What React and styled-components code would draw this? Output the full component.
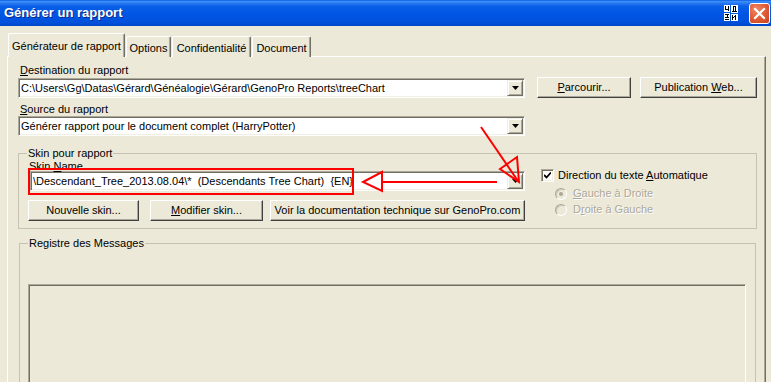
import React from 'react'
import styled, { createGlobalStyle } from 'styled-components'

const GlobalStyle = createGlobalStyle`
  html, body {
    margin: 0;
    padding: 0;
    background: #ece9d8;
  }
  body {
    font-family: "Liberation Sans", Arial, sans-serif;
    font-size: 11px;
    color: #000;
  }
`

const Window = styled.div`
  position: relative;
  width: 771px;
  height: 382px;
  overflow: hidden;
  background: #ece9d8;
  display: flex;
  flex-direction: column;
`

const TitleBar = styled.div`
  flex: none;
  height: 26px;
  box-sizing: border-box;
  display: flex;
  align-items: center;
  padding: 0 1px 0 4px;
  background: linear-gradient(to bottom, #0a5ae0 0%, #3d8ff7 6%, #2a7af2 12%, #0a5fe8 24%, #0055e3 55%, #0052dd 85%, #0146c6 100%);
`

const Title = styled.div`
  flex: 1;
  color: #fff;
  font-family: "Liberation Sans", Arial, sans-serif;
  font-weight: bold;
  font-size: 13px;
  text-shadow: 1px 1px #0a2a8a;
  margin-top: -1px;
`

const Glyph = styled.svg`
  flex: none;
  display: block;
  margin-top: -1px;
`

const CloseButton = styled.div`
  flex: none;
  width: 21px;
  height: 21px;
  box-sizing: border-box;
  margin-left: 11px;
  border: 1px solid #fff;
  border-radius: 3px;
  background: radial-gradient(circle at 35% 30%, #f08a68 0%, #e2603a 45%, #c8401a 100%);
  display: flex;
  align-items: center;
  justify-content: center;
`

const Body = styled.div`
  flex: 1;
  display: flex;
  flex-direction: column;
  padding: 7px 5px 0 7px;
  min-height: 0;
`

const TabStrip = styled.div`
  display: flex;
  align-items: flex-end;
  height: 24px;
  padding-left: 1px;
  margin-bottom: -1px;
  position: relative;
  z-index: 1;
`

const Tab = styled.div`
  box-sizing: border-box;
  width: ${p => p.$w}px;
  height: ${p => (p.$active ? 24 : 21)}px;
  padding-top: ${p => (p.$active ? 6 : 5)}px;
  line-height: 13px;
  text-align: center;
  white-space: nowrap;
  background: #ece9d8;
  border-top: 1px solid #fff;
  border-left: 1px solid #fff;
  border-right: 1px solid #716f64;
  box-shadow: inset -1px 0 #aca899;
  border-radius: 2px 2px 0 0;
  margin-left: ${p => (p.$active ? 0 : 1)}px;
`

const Panel = styled.div`
  flex: 1;
  box-sizing: border-box;
  border-top: 1px solid #fff;
  border-left: 1px solid #fff;
  border-right: 1px solid #716f64;
  box-shadow: inset -1px 0 #aca899;
  padding: 7px 0 0 10px;
`

const Label = styled.div`
  line-height: 13px;
  height: ${p => p.$h || 13}px;
  margin-top: ${p => p.$mt || 0}px;
  padding-left: ${p => p.$pl || 2}px;
  white-space: nowrap;
`

const Row = styled.div`
  display: flex;
  align-items: flex-end;
  margin-top: ${p => p.$mt || 0}px;
`

const Combo = styled.div`
  box-sizing: border-box;
  width: ${p => p.$w}px;
  height: 20px;
  margin-left: ${p => p.$ml || 0}px;
  background: #fff;
  border: 1px solid;
  border-color: #aca899 #fff #fff #aca899;
  box-shadow: inset 1px 1px #716f64, inset -1px -1px #f1efe2;
  display: flex;
  align-items: center;
  padding-left: 2px;
`

const ComboText = styled.div`
  flex: 1;
  white-space: nowrap;
  overflow: hidden;
  line-height: 13px;
`

const DropButton = styled.div`
  flex: none;
  box-sizing: border-box;
  width: 16px;
  height: 16px;
  margin-right: 1px;
  background: #ece9d8;
  border: 1px solid;
  border-color: #f1efe2 #716f64 #716f64 #f1efe2;
  box-shadow: inset 1px 1px #fff, inset -1px -1px #aca899;
  display: flex;
  align-items: center;
  justify-content: center;
`

const Button = styled.div`
  box-sizing: border-box;
  flex: none;
  width: ${p => p.$w}px;
  height: 21px;
  margin-left: ${p => p.$ml || 0}px;
  background: #ece9d8;
  border: 1px solid;
  border-color: #fff #404040 #404040 #fff;
  box-shadow: inset -1px -1px #aca899;
  line-height: 18px;
  text-align: center;
  white-space: nowrap;
`

const GroupBox = styled.fieldset`
  box-sizing: border-box;
  min-width: 0;
  width: ${p => p.$w}px;
  margin: ${p => p.$mt}px 0 0 ${p => p.$ml || 0}px;
  padding: 0 8px ${p => p.$pb || 0}px 8px;
  border: 1px solid #c5c2b2;
`

const Legend = styled.legend`
  padding: 0 1px;
  line-height: 13px;
`

const SkinLayout = styled.div`
  display: flex;
`

const LeftColumn = styled.div`
  width: 497px;
  margin-left: 1px;
`

const RightColumn = styled.div`
  margin-left: 16px;
  padding-top: 9px;
`

const CheckRow = styled.div`
  display: flex;
  align-items: center;
  height: 13px;
  margin-top: ${p => p.$mt || 0}px;
  margin-left: ${p => p.$ml || 0}px;
  line-height: 13px;
  white-space: nowrap;
  color: ${p => (p.$disabled ? '#aca899' : '#000')};
  text-shadow: ${p => (p.$disabled ? '1px 1px #fff' : 'none')};
`

const CheckBox = styled.div`
  box-sizing: border-box;
  width: 13px;
  height: 13px;
  margin-right: 4px;
  background: #fff;
  border: 1px solid;
  border-color: #aca899 #fff #fff #aca899;
  box-shadow: inset 1px 1px #716f64, inset -1px -1px #f1efe2;
  display: flex;
  align-items: center;
  justify-content: center;
`

const Radio = styled.div`
  box-sizing: border-box;
  width: 12px;
  height: 12px;
  margin-right: 6px;
  border-radius: 50%;
  background: #ece9d8;
  border: 1px solid;
  border-color: #aca899 #fff #fff #aca899;
  box-shadow: inset 1px 1px #c9c6b6;
  display: flex;
  align-items: center;
  justify-content: center;

  &::after {
    content: '';
    display: ${p => (p.$on ? 'block' : 'none')};
    width: 4px;
    height: 4px;
    border-radius: 50%;
    background: #aca899;
  }
`

const LogBox = styled.div`
  box-sizing: border-box;
  width: 718px;
  height: 140px;
  margin: 34px 0 0 0;
  background: #ece9d8;
  border: 1px solid;
  border-color: #aca899 #fff #fff #aca899;
  box-shadow: inset 1px 1px #716f64;
`

const Annotations = styled.svg`
  position: absolute;
  top: 0;
  left: 0;
  pointer-events: none;
  z-index: 5;
`

const Arrow = () => (
  <svg width="7" height="4" viewBox="0 0 7 4">
    <polygon points="0,0 7,0 3.5,4" fill="#000" />
  </svg>
)

const ComboBox = ({ w, ml, children }) => (
  <Combo $w={w} $ml={ml}>
    <ComboText>{children}</ComboText>
    <DropButton>
      <Arrow />
    </DropButton>
  </Combo>
)

const App = () => {
  return (
    <Window>
      <GlobalStyle />
      <TitleBar>
        <Title>Générer un rapport</Title>
        <Glyph width="14" height="16" viewBox="0 0 14 16">
          <g fill="#fff">
            <rect x="0" y="0" width="6" height="7" />
            <rect x="7" y="0" width="7" height="8" />
            <rect x="0" y="8" width="6" height="8" />
            <rect x="7" y="9" width="7" height="7" />
          </g>
          <g fill="#000">
            <rect x="1" y="1" width="1" height="3" />
            <rect x="4" y="1" width="1" height="5" />
            <rect x="1" y="4" width="3" height="1" />
            <rect x="9" y="1" width="3" height="1" />
            <rect x="9" y="1" width="1" height="5" />
            <rect x="11" y="1" width="1" height="5" />
            <rect x="8" y="6" width="5" height="1" />
            <rect x="1" y="9" width="4" height="1" />
            <rect x="3" y="10" width="1" height="2" />
            <rect x="1" y="12" width="4" height="1" />
            <rect x="1" y="14" width="4" height="1" />
            <rect x="8" y="10" width="1" height="5" />
            <rect x="11" y="10" width="1" height="5" />
            <rect x="9" y="12" width="1" height="1" />
            <rect x="10" y="11" width="1" height="1" />
          </g>
        </Glyph>
        <CloseButton>
          <svg width="13" height="13" viewBox="0 0 13 13">
            <path d="M2 2 L11 11 M11 2 L2 11" stroke="#fff" strokeWidth="2.2" strokeLinecap="square" />
          </svg>
        </CloseButton>
      </TitleBar>

      <Body>
        <TabStrip>
          <Tab $active $w={117}>Générateur de rapport</Tab>
          <Tab $w={45}>Options</Tab>
          <Tab $w={79}>Confidentialité</Tab>
          <Tab $w={59}>Document</Tab>
        </TabStrip>

        <Panel>
          <Label>
            <u>D</u>estination du rapport
          </Label>
          <Row>
            <ComboBox w={507}>C:\Users\Gg\Datas\Gérard\Généalogie\Gérard\GenoPro Reports\treeChart</ComboBox>
            <Button $w={94} $ml={12}>
              <u>P</u>arcourir...
            </Button>
            <Button $w={117} $ml={9}>
              Publication <u>W</u>eb...
            </Button>
          </Row>

          <Label $mt={5}>
            <u>S</u>ource du rapport
          </Label>
          <ComboBox w={507}>Générer rapport pour le document complet (HarryPotter)</ComboBox>

          <GroupBox $w={739} $mt={11} $pb={7}>
            <Legend>Skin pour rapport</Legend>
            <SkinLayout>
              <LeftColumn>
                <Label $h={11} $pl={1}>
                  Skin <u>N</u>ame
                </Label>
                <ComboBox w={495} ml={2}>
                  \Descendant_Tree_2013.08.04\*&nbsp;&nbsp;(Descendants Tree Chart)&nbsp;&nbsp;{'{EN}'}
                </ComboBox>
                <Row $mt={9}>
                  <Button $w={111}>Nouvelle skin...</Button>
                  <Button $w={113} $ml={11}>
                    <u>M</u>odifier skin...
                  </Button>
                  <Button $w={255} $ml={7}>
                    Voir la documentation technique sur GenoPro.com
                  </Button>
                </Row>
              </LeftColumn>
              <RightColumn>
                <CheckRow>
                  <CheckBox>
                    <svg width="7" height="7" viewBox="0 0 7 7">
                      <path d="M0 3 L2.5 5.5 L7 0.5" stroke="#000" strokeWidth="1.8" fill="none" />
                    </svg>
                  </CheckBox>
                  <span>
                    Direction du texte <u>A</u>utomatique
                  </span>
                </CheckRow>
                <CheckRow $disabled $mt={5} $ml={14}>
                  <Radio $on />
                  <span>
                    <u>G</u>auche à Droite
                  </span>
                </CheckRow>
                <CheckRow $disabled $mt={3} $ml={14}>
                  <Radio />
                  <span>
                    D<u>r</u>oite à Gauche
                  </span>
                </CheckRow>
              </RightColumn>
            </SkinLayout>
          </GroupBox>

          <GroupBox $w={737} $mt={8} $ml={1}>
            <Legend>Registre des Messages</Legend>
            <LogBox />
          </GroupBox>
        </Panel>
      </Body>

      <Annotations width="771" height="382" viewBox="0 0 771 382">
        <g stroke="#f00" strokeWidth="2" fill="none">
          <rect x="29" y="169" width="324" height="25" />
          <line x1="481" y1="127" x2="518" y2="181" />
          <polygon points="500,169 517,157 519,182" />
          <line x1="497" y1="182" x2="382" y2="182" />
          <polygon points="363,182 382,172 382,191" />
        </g>
      </Annotations>
    </Window>
  )
}

export default App
